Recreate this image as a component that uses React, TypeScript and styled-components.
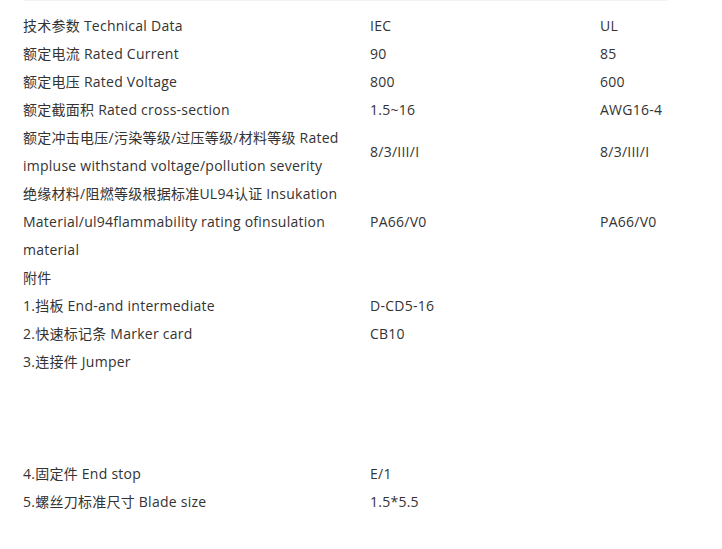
import React from "react";
import styled, { createGlobalStyle } from "styled-components";

const Global = createGlobalStyle`
  html, body { margin: 0; padding: 0; background: #fff; }
  body {
    font-family: "Open Sans", "Noto Sans CJK SC", sans-serif;
    color: #333;
  }
`;

const Page = styled.div`
  padding: 0 0 0 23px;
`;

const Table = styled.div`
  width: 644px;
  border-top: 1px solid #f3f3f3;
  padding-top: 11px;
  font-size: 14px;
  line-height: 28px;
  letter-spacing: 0.25px;
`;

const Row = styled.div<{ $lines?: number }>`
  display: grid;
  grid-template-columns: 347px 230px 1fr;
  align-items: center;
  min-height: ${(p) => (p.$lines ?? 1) * 28}px;
`;

const Label = styled.div<{ $top?: boolean }>`
  white-space: nowrap;
  align-self: ${(p) => (p.$top ? "start" : "center")};
`;

const Value = styled.div`
  white-space: nowrap;
`;

type Item = { label: React.ReactNode; iec?: string; ul?: string; lines?: number; top?: boolean };

const rows: Item[] = [
  { label: "技术参数 Technical Data", iec: "IEC", ul: "UL" },
  { label: "额定电流 Rated Current", iec: "90", ul: "85" },
  { label: "额定电压 Rated Voltage", iec: "800", ul: "600" },
  { label: "额定截面积 Rated cross-section", iec: "1.5~16", ul: "AWG16-4" },
  {
    label: (
      <>
        额定冲击电压/污染等级/过压等级/材料等级 Rated
        <br />
        impluse withstand voltage/pollution severity
      </>
    ),
    iec: "8/3/III/I",
    ul: "8/3/III/I",
  },
  {
    label: (
      <>
        绝缘材料/阻燃等级根据标准UL94认证 Insukation
        <br />
        Material/ul94flammability rating ofinsulation
        <br />
        material
      </>
    ),
    iec: "PA66/V0",
    ul: "PA66/V0",
  },
  { label: "附件" },
  { label: "1.挡板 End-and intermediate", iec: "D-CD5-16" },
  { label: "2.快速标记条 Marker card", iec: "CB10" },
  { label: "3.连接件 Jumper", lines: 4, top: true },
  { label: "4.固定件 End stop", iec: "E/1" },
  { label: "5.螺丝刀标准尺寸 Blade size", iec: "1.5*5.5" },
];

export default function App() {
  return (
    <>
      <Global />
      <Page>
        <Table>
          {rows.map((r, i) => (
            <Row key={i} $lines={r.lines}>
              <Label $top={r.top}>{r.label}</Label>
              <Value>{r.iec ?? ""}</Value>
              <Value>{r.ul ?? ""}</Value>
            </Row>
          ))}
        </Table>
      </Page>
    </>
  );
}
